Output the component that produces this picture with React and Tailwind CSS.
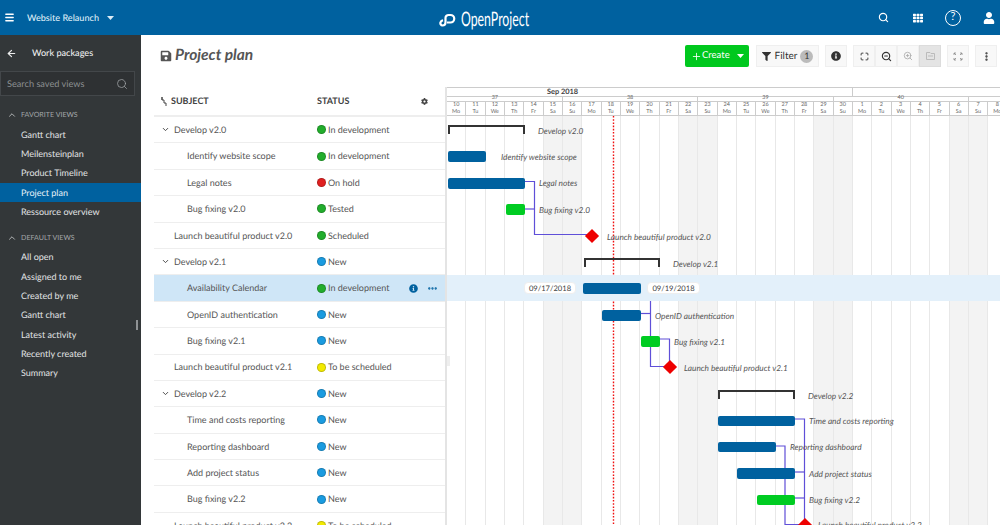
import React from "react";
import { Menu, ChevronDown, ChevronUp, Search, ArrowLeft, ZoomIn, ZoomOut, Maximize, Plus, EllipsisVertical, Ellipsis } from "lucide-react";
import { FaUser, FaFilter, FaInfoCircle, FaSave, FaCog, FaTh } from "react-icons/fa";

const G_X = 447;
const G_Y = 116;
const WD = ["Mo", "Tu", "We", "Th", "Fr", "Sa", "Su"];
const days = Array.from({ length: 30 }, (_, i) => {
  const d = i + 10;
  return { n: d > 30 ? d - 30 : d, wd: WD[i % 7], weekend: i % 7 >= 5 };
});

const GREEN = "#22ad2c";
const BLUE = "#1a9be0";
const rows = [
  { t: "Develop v2.0", s: "In development", c: GREEN, k: "g" },
  { t: "Identify website scope", s: "In development", c: GREEN, k: "c" },
  { t: "Legal notes", s: "On hold", c: "#e02020", k: "c" },
  { t: "Bug fixing v2.0", s: "Tested", c: GREEN, k: "c" },
  { t: "Launch beautiful product v2.0", s: "Scheduled", c: GREEN, k: "m" },
  { t: "Develop v2.1", s: "New", c: BLUE, k: "g" },
  { t: "Availability Calendar", s: "In development", c: GREEN, k: "c", sel: true },
  { t: "OpenID authentication", s: "New", c: BLUE, k: "c" },
  { t: "Bug fixing v2.1", s: "New", c: BLUE, k: "c" },
  { t: "Launch beautiful product v2.1", s: "To be scheduled", c: "#f2ea00", k: "m" },
  { t: "Develop v2.2", s: "New", c: BLUE, k: "g" },
  { t: "Time and costs reporting", s: "New", c: BLUE, k: "c" },
  { t: "Reporting dashboard", s: "New", c: BLUE, k: "c" },
  { t: "Add project status", s: "New", c: BLUE, k: "c" },
  { t: "Bug fixing v2.2", s: "New", c: BLUE, k: "c" },
  { t: "Launch beautiful product v2.2", s: "To be scheduled", c: "#f2ea00", k: "m" },
];

const bars = [
  [448, 151, 38, 11, "#00619f"],
  [448, 178, 77, 11, "#00619f"],
  [506, 204, 19, 11, "#00cc22"],
  [583, 283, 58, 11, "#00619f"],
  [602, 310, 39, 11, "#00619f"],
  [641, 336, 19, 11, "#00cc22"],
  [718, 416, 77, 10, "#00619f"],
  [718, 442, 58, 10, "#00619f"],
  [737, 468, 58, 11, "#00619f"],
  [757, 495, 38, 10, "#00cc22"],
];
const brackets = [[448, 125, 77], [584, 258, 76], [718, 390, 77]];
const diamonds = [[592, 236], [670, 367], [805, 525]];
const labels = [
  ["Develop v2.0", 538, 131],
  ["Identify website scope", 501, 157],
  ["Legal notes", 539, 183],
  ["Bug fixing v2.0", 539, 210],
  ["Launch beautiful product v2.0", 607, 237],
  ["Develop v2.1", 673, 264],
  ["OpenID authentication", 655, 316],
  ["Bug fixing v2.1", 674, 342],
  ["Launch beautiful product v2.1", 684, 368],
  ["Develop v2.2", 808, 396],
  ["Time and costs reporting", 809, 421],
  ["Reporting dashboard", 790, 447],
  ["Add project status", 809, 474],
  ["Bug fixing v2.2", 809, 500],
  ["Launch beautiful product v2.2", 818, 525],
];
const links = [
  "525,181.5 534.5,181.5 534.5,234.5 588,234.5",
  "525,209 534.5,209",
  "650.5,301 650.5,366.5 666,366.5",
  "641,313.5 650.5,313.5",
  "660,339 669.5,339 669.5,364",
  "795,419 804.5,419 804.5,521",
  "776,446 785,446 785,524.5 800,524.5",
  "795,472 804.5,472",
  "795,498 804.5,498",
];

function Lnk({ children, active }) {
  return (
    <div className={`h-[19.3px] pl-[21px] flex items-center text-[9px] ${active ? "bg-[#00619f] text-[#e8f2f8]" : "text-[#e2e4e5]"}`}>
      {children}
    </div>
  );
}

function SideHead({ children, className = "" }) {
  return (
    <div className={`flex items-center h-[20px] pl-[7px] text-[7.1px] text-[#a2a6a8] ${className}`}>
      <ChevronUp size={10} strokeWidth={2} className="text-[#c8cacb] mr-[4px]" />
      <span>{children}</span>
    </div>
  );
}

function Btn({ children, className = "" }) {
  return (
    <div className={`h-[22px] flex items-center justify-center bg-[#f8f8f8] border border-[#efefef] text-[#333] ${className}`}>
      {children}
    </div>
  );
}

function Logo() {
  return (
    <svg width="18" height="15" viewBox="0 0 18 15" fill="none" stroke="#fff" strokeWidth="2.2" className="shrink-0">
      <path d="M8 10.5 H11.5 a3.6 3.6 0 0 0 0 -7.5 H9.5 a3 3 0 0 0 -3 3 V10.5 a3 3 0 0 1 -3 3 a2.4 2.4 0 0 1 -2 -3.2 a3 3 0 0 1 2.6 -2" />
    </svg>
  );
}

export default function App() {
  return (
    <div className="w-[1000px] h-[525px] overflow-hidden flex flex-col bg-white font-['Lato','Liberation_Sans',sans-serif] text-[#555] [text-rendering:geometricPrecision]">
      <header className="h-[35px] shrink-0 bg-[#00619f] text-white flex items-center relative">
        <Menu size={11} strokeWidth={3} className="ml-[4px]" />
        <span className="ml-[12px] text-[9.1px] font-medium text-[#dcecf6]">Website Relaunch</span>
        <svg width="7" height="4" viewBox="0 0 7 4" className="ml-[8px]"><path d="M0 0H7L3.5 4Z" fill="#dcecf6" /></svg>
        <div className="absolute left-[439px] top-[9px] flex items-center gap-[4px]">
          <Logo />
          <span className="text-[20px] leading-none font-normal origin-left scale-x-[0.615] inline-block">OpenProject</span>
        </div>
        <div className="ml-auto flex items-center">
          <Search size={11} strokeWidth={2.5} className="mr-[24px]" />
          <FaTh size={10} className="mr-[22px]" />
          <div className="w-[16px] h-[16px] rounded-full border border-white flex items-center justify-center text-[11px] mr-[22px]">?</div>
          <FaUser size={12} className="mr-[5px]" />
        </div>
      </header>

      <div className="flex-1 flex min-h-0">
        <aside className="w-[141px] shrink-0 bg-[#333739] relative">
          <div className="h-[36px] flex items-center pl-[6px] text-[#eceded]">
            <ArrowLeft size={11} strokeWidth={2.5} />
            <span className="ml-[15px] text-[9.1px] font-medium">Work packages</span>
          </div>
          <div className="w-[135px] h-[25px] bg-[#2e3133] border border-[#43474a] flex items-center justify-between pl-[6px] pr-[6px] text-[9.2px] text-[#8a8e90]">
            <span>Search saved views</span>
            <Search size={12} strokeWidth={1.5} className="text-[#a2a6a8]" />
          </div>
          <div className="mt-[9px]">
            <SideHead>FAVORITE VIEWS</SideHead>
            <Lnk>Gantt chart</Lnk>
            <Lnk>Meilensteinplan</Lnk>
            <Lnk>Product Timeline</Lnk>
            <Lnk active>Project plan</Lnk>
            <Lnk>Ressource overview</Lnk>
          </div>
          <div className="mt-[7px]">
            <SideHead className="mb-[-1px]">DEFAULT VIEWS</SideHead>
            <Lnk>All open</Lnk>
            <Lnk>Assigned to me</Lnk>
            <Lnk>Created by me</Lnk>
            <Lnk>Gantt chart</Lnk>
            <Lnk>Latest activity</Lnk>
            <Lnk>Recently created</Lnk>
            <Lnk>Summary</Lnk>
          </div>
          <div className="absolute left-[136px] top-[285px] w-[2px] h-[10px] bg-[#8f9294]" />
        </aside>

        <main className="flex-1 min-w-0 flex flex-col">
          <div className="h-[52px] shrink-0 flex items-center pl-[19px] pr-[3px] pb-[10px]">
            <FaSave size={12} className="text-[#555]" />
            <h1 className="ml-[3px] text-[15.5px] font-bold italic text-[#555] leading-none">Project plan</h1>
            <div className="ml-auto flex items-center">
              <div className="w-[64px] h-[22px] bg-[#00c81e] rounded-[2px] flex items-center pl-[6px] text-white text-[9.5px]">
                <Plus size={11} strokeWidth={1.8} />
                <span>Create</span>
                <svg width="7" height="4" viewBox="0 0 7 4" className="ml-[7px]"><path d="M0 0H7L3.5 4Z" fill="#fff" /></svg>
              </div>
              <Btn className="w-[63px] ml-[7px] text-[10px]">
                <FaFilter size={9} />
                <span className="ml-[4px]">Filter</span>
                <span className="ml-[3px] w-[13px] h-[13px] rounded-full bg-[#bbb] text-[9px] flex items-center justify-center">1</span>
              </Btn>
              <Btn className="w-[22px] ml-[6px]"><FaInfoCircle size={10} /></Btn>
              <Btn className="w-[22px] ml-[6px]"><Maximize size={9} strokeWidth={2.5} /></Btn>
              <Btn className="w-[22px]"><ZoomOut size={11} strokeWidth={2.5} /></Btn>
              <Btn className="w-[22px] text-[#aaa]"><ZoomIn size={10} strokeWidth={2} /></Btn>
              <Btn className="w-[22px] !bg-[#e4e4e4] !border-[#dcdcdc] text-[#bbb]">
                <svg width="9" height="8" viewBox="0 0 9 8" fill="none" stroke="#bbb"><path d="M.5 .5H4L5 1.5H8.5V7.5H.5ZM2 4H7" /></svg>
              </Btn>
              <Btn className="w-[22px] ml-[6px]">
                <svg width="10" height="9" viewBox="0 0 10 9" fill="none" stroke="#888" strokeWidth=".8"><path d="M1 1L3 3M1 1H3M1 1V3M9 1L7 3M9 1H7M9 1V3M1 8L3 6M1 8H3M1 8V6M9 8L7 6M9 8H7M9 8V6" /></svg>
              </Btn>
              <Btn className="w-[22px] ml-[6px]"><EllipsisVertical size={11} strokeWidth={3} /></Btn>
            </div>
          </div>

          <div className="flex-1 min-h-0 flex pl-[13px]">
            <div className="w-[291px] shrink-0">
              <div className="h-[30px] flex items-center border-b-2 border-[#eeeeee] text-[9px] font-bold text-[#444]">
                <svg width="6" height="9" viewBox="0 0 6 9" fill="none" stroke="#444" className="ml-[7px] shrink-0"><path d="M1 0V3H3V6H5V9M1 3V0" /></svg>
                <span className="ml-[4px] w-[146px] shrink-0">SUBJECT</span>
                <span className="w-[104px] shrink-0">STATUS</span>
                <FaCog size={7} className="shrink-0" />
              </div>
              {rows.map((r, i) => (
                <div key={i} className={`h-[26.4px] flex items-center border-b border-[#eeeeee] text-[9px] ${r.sel ? "bg-[#cfe6f7]" : ""}`}>
                  <div className="w-[163px] shrink-0 flex items-center">
                    {r.k === "g" && <ChevronDown size={9} strokeWidth={2.5} className="ml-[7px] mr-[4px] text-[#444]" />}
                    {r.k === "m" && <span className="ml-[20px]" />}
                    {r.k === "c" && <span className="ml-[33px]" />}
                    <span className="whitespace-nowrap">{r.t}</span>
                  </div>
                  <span className="w-[9px] h-[9px] rounded-full shrink-0 border border-black/20" style={{ backgroundColor: r.c }} />
                  <span className="ml-[2px] whitespace-nowrap">{r.s}</span>
                  {r.sel && (
                    <div className="ml-auto flex items-center pr-[7px] text-[#00619f]">
                      <FaInfoCircle size={9} className="mr-[9px]" />
                      <Ellipsis size={11} strokeWidth={3} />
                    </div>
                  )}
                </div>
              ))}
            </div>

            <div className="w-[2px] shrink-0 bg-[#e4e4e4]" />

            <div className="flex-1 min-w-0 flex flex-col overflow-hidden">
              <div className="h-[29px] shrink-0 text-[#666] overflow-hidden">
                <div className="h-[10px] flex border-t border-b border-[#ccc] ml-[-174px] w-[900px]">
                  <div className="w-[580px] shrink-0 border-r border-[#ccc] flex items-center justify-center text-[7.4px] font-bold text-[#444]">Sep 2018</div>
                  <div className="flex-1" />
                </div>
                <div className="h-[5px] flex ml-[-19.33px] w-[700px] border-b border-[#ccc]">
                  {[37, 38, 39, 40, 41].map((w) => (
                    <div key={w} className="w-[135.3px] shrink-0 border-r border-[#ccc] flex items-center justify-center text-[5.5px] leading-none">{w}</div>
                  ))}
                </div>
                <div className="h-[14px] flex border-b border-[#ccc]">
                  {days.map((d, i) => (
                    <div key={i} className="w-[19.33px] shrink-0 border-r border-[#ccc] flex flex-col items-center justify-center text-[5.5px] leading-[6.5px]">
                      <span>{d.n}</span>
                      <span>{d.wd}</span>
                    </div>
                  ))}
                </div>
              </div>

              <div className="flex-1 relative overflow-hidden">
                <div className="absolute inset-0 flex">
                  {days.map((d, i) => (
                    <div key={i} className={`w-[19.33px] shrink-0 border-r border-[#e8e8e8] ${d.weekend ? "bg-[#f3f3f3]" : ""}`} />
                  ))}
                </div>
                <svg className="absolute left-[165px] top-0" width="3" height="409">
                  <line x1="1.5" y1="0" x2="1.5" y2="409" stroke="#f01010" strokeWidth="1.4" strokeDasharray="1.6 1.6" />
                </svg>
                <div className="absolute left-0 right-0 top-[159px] h-[26px] bg-[#e3f0fa]" />

                <svg className="absolute inset-0" width="553" height="409" viewBox={`${G_X} ${G_Y} 553 409`} fill="none" stroke="#5f4fd8" strokeWidth="1.2">
                  {links.map((p, i) => <polyline key={i} points={p} />)}
                </svg>

                {bars.map(([x, y, w, h, c], i) => (
                  <div key={i} className="absolute rounded-[2px]" style={{ left: x - G_X, top: y - G_Y, width: w, height: h, backgroundColor: c }} />
                ))}
                {brackets.map(([x, y, w], i) => (
                  <div key={i} className="absolute h-[9px] border-t-2 border-l-2 border-r-2 border-[#333]" style={{ left: x - G_X, top: y - G_Y, width: w }} />
                ))}
                {diamonds.map(([x, y], i) => (
                  <div key={i} className="absolute w-[10px] h-[10px] rotate-45 bg-[#ee0000]" style={{ left: x - G_X - 5, top: y - G_Y - 5 }} />
                ))}
                {labels.map(([t, x, y], i) => (
                  <span key={i} className="absolute text-[8.3px] italic leading-[12px] whitespace-nowrap text-[#555]" style={{ left: x - G_X, top: y - G_Y - 6.5 }}>{t}</span>
                ))}

                <span className="absolute left-[77px] top-[166px] w-[52px] h-[12px] rounded-[4px] bg-white text-[7.6px] leading-[10px] text-center text-[#444] border border-[#eeeeee]">09/17/2018</span>
                <span className="absolute left-[200px] top-[166px] w-[53px] h-[12px] rounded-[4px] bg-white text-[7.6px] leading-[10px] text-center text-[#444] border border-[#eeeeee]">09/19/2018</span>
                <div className="absolute left-0 top-[240px] w-[3px] h-[10px] bg-[#eeeeee]" />
              </div>
            </div>
          </div>
        </main>
      </div>
    </div>
  );
}
